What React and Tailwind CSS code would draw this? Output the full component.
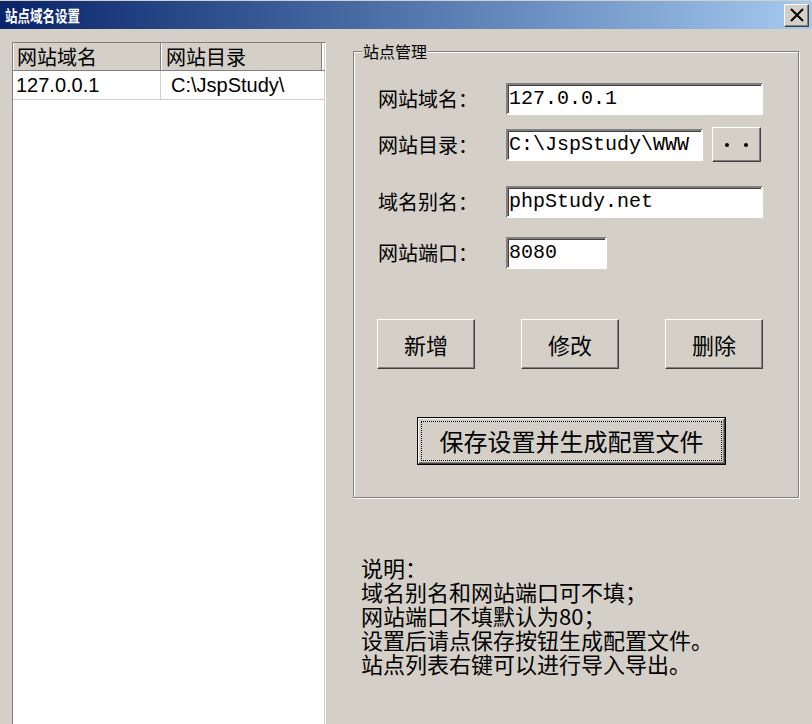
import React from 'react';

const cjk = "font-['Noto_Sans_CJK_SC','Noto_Sans',sans-serif]";
const raised =
  'border border-t-white border-l-white border-r-[#404040] border-b-[#404040] shadow-[inset_-1px_-1px_0_#808080] bg-[#d4d0c8]';
const sunken =
  'border-2 border-t-[#808080] border-l-[#808080] border-r-white border-b-white bg-white shadow-[inset_1px_1px_0_#404040]';

const Field = ({ value, width }) => (
  <div className={`${sunken} ${width} h-[32px] flex items-center pl-[1px] overflow-hidden`}>
    <span className="font-['Liberation_Mono',monospace] text-[20px] leading-none text-black whitespace-nowrap">
      {value}
    </span>
  </div>
);

const Label = ({ children }) => (
  <div className={`${cjk} w-[152px] pl-[24px] text-[20px] leading-none text-black`}>{children}</div>
);

const Button = ({ children }) => (
  <button className={`${raised} ${cjk} w-[98px] h-[50px] text-[22px] text-black flex items-center justify-center`}>
    {children}
  </button>
);

const App = () => {
  return (
    <div className={`w-[812px] h-[724px] bg-[#d4d0c8] overflow-hidden ${cjk}`}>
      {/* title bar */}
      <div className="h-[29px] border-t border-[#d4d0c8] bg-gradient-to-r from-[#0a246a] to-[#a6caf0] flex items-center justify-between pl-[5px] pr-[3px]">
        <span className="text-white font-bold text-[16px] leading-none scale-x-[0.78] origin-left whitespace-nowrap">
          站点域名设置
        </span>
        <button className={`${raised} w-[25px] h-[23px] flex items-center justify-center`}>
          <svg width="16" height="16" viewBox="0 0 16 16">
            <path d="M2 2 L14 14 M14 2 L2 14" stroke="#000" strokeWidth="2" />
          </svg>
        </button>
      </div>

      <div className="flex h-[695px]">
        {/* site list */}
        <div className="w-[326px] pl-[12px] pt-[13px]">
          <div className="h-[700px] bg-white border border-t-[#808080] border-l-[#808080] border-r-white border-b-white shadow-[inset_-1px_-1px_0_#d4d0c8]">
            <div className="flex h-[28px] border-b border-[#808080]">
              <div className="w-[148px] bg-[#d4d0c8] border-l border-white border-r border-r-[#808080] flex items-center pl-[3px] text-[20px] leading-none text-black">
                网站域名
              </div>
              <div className="flex-1 bg-[#d4d0c8] border-l border-white border-r border-r-[#808080] mr-[3px] flex items-center pl-[4px] text-[20px] leading-none text-black">
                网站目录
              </div>
            </div>
            <div className="flex h-[29px] border-b border-[#d4d0c8] font-['Liberation_Sans',sans-serif] text-[20px] leading-none text-black">
              <div className="w-[148px] flex items-center pl-[3px] border-r border-[#d4d0c8]">127.0.0.1</div>
              <div className="flex-1 flex items-center pl-[10px] overflow-hidden whitespace-nowrap mr-[3px]">
                C:\JspStudy\
              </div>
            </div>
          </div>
        </div>

        {/* right side */}
        <div className="flex-1 pl-[27px] pt-[22px]">
          <div className="relative w-[446px] h-[447px] border border-[#808080] shadow-[inset_1px_1px_0_white,1px_1px_0_white]">
            <span className="absolute left-[8px] top-[-9px] bg-[#d4d0c8] px-[1px] text-[16px] leading-[16px] text-black">
              站点管理
            </span>

            <div className="flex flex-col pt-[31px]">
              <div className="flex items-center">
                <Label>网站域名：</Label>
                <Field value="127.0.0.1" width="w-[257px]" />
              </div>
              <div className="flex items-center mt-[12px]">
                <Label>网站目录：</Label>
                <Field value="C:\JspStudy\WWW" width="w-[197px]" />
                <button className={`${raised} ml-[9px] w-[49px] h-[35px] flex items-center justify-center gap-[15px]`}>
                  <span className="w-[4px] h-[4px] rounded-full bg-black" />
                  <span className="w-[4px] h-[4px] rounded-full bg-black" />
                </button>
              </div>
              <div className="flex items-center mt-[24px]">
                <Label>域名别名：</Label>
                <Field value="phpStudy.net" width="w-[257px]" />
              </div>
              <div className="flex items-center mt-[19px]">
                <Label>网站端口：</Label>
                <Field value="8080" width="w-[101px]" />
              </div>

              <div className="flex gap-[46px] pl-[23px] mt-[50px]">
                <Button>新增</Button>
                <Button>修改</Button>
                <Button>删除</Button>
              </div>

              <div className="pl-[63px] mt-[48px]">
                <button className="w-[309px] h-[48px] border border-black p-0">
                  <div className={`${raised} h-full flex p-[2px]`}>
                    <div className="flex-1 border border-dotted border-black flex items-center justify-center text-[24px] leading-none text-black">
                      保存设置并生成配置文件
                    </div>
                  </div>
                </button>
              </div>
            </div>
          </div>

          <div className="mt-[57px] ml-[8px] text-[22px] leading-[24px] text-black">
            <p>说明：</p>
            <p>域名别名和网站端口可不填；</p>
            <p>网站端口不填默认为80；</p>
            <p>设置后请点保存按钮生成配置文件。</p>
            <p>站点列表右键可以进行导入导出。</p>
          </div>
        </div>
      </div>
    </div>
  );
};

export default App;
